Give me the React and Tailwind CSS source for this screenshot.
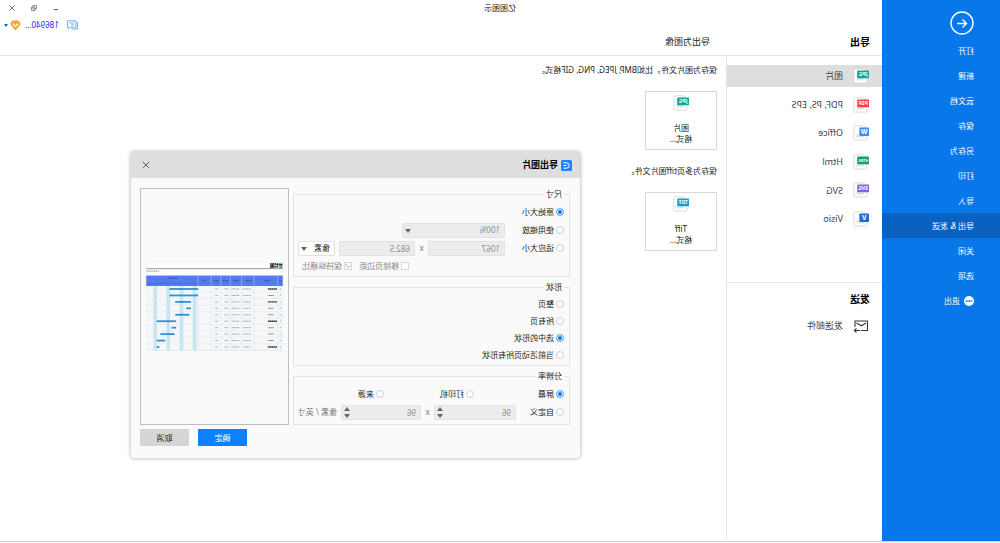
const navItems = ["打开", "新建", "云文档", "保存", "另存为", "打印", "导入", "导出 & 发送", "关闭", "选项"];

const formats = [
  { label: "图片", tag: "JPG", color: "#12a594" },
  { label: "PDF, PS, EPS", tag: "PDF", color: "#fb3c4a" },
  { label: "Office", tag: "W", color: "#3a8ff5", square: true },
  { label: "Html", tag: "HTML", color: "#12a06a" },
  { label: "SVG", tag: "SVG", color: "#8561e8" },
  { label: "Visio", tag: "V", color: "#2567cf", square: true },
];

function FileIcon({ tag, color, square }) {
  const size = square ? 7 : tag === "HTML" ? 3.6 : tag === "TIFF" ? 4.6 : 5.2;
  return (
    <svg viewBox="0 0 16 16" className="size-4 shrink-0" aria-hidden="true">
      <path d="M5 .9h9a1.1 1.1 0 0 1 1.1 1.1v12a1.1 1.1 0 0 1-1.1 1.1H3.2A1.1 1.1 0 0 1 2.1 14V3.8z" fill="#fff" stroke="#d2d2d2" strokeWidth=".8" />
      <path d="M5 9h7.5v3.5H5z" fill="#e4e4e4" />
      <rect x="0" y="2.4" width={square ? 9.6 : 11.8} height={square ? 8.6 : 7.8} rx=".8" fill={color} />
      <text x={square ? 4.8 : 5.9} y={square ? 9.1 : tag.length > 3 ? 7.8 : 8.2} fontSize={size} fontWeight="700" textAnchor="middle" fill="#fff">{tag}</text>
    </svg>
  );
}

function Radio({ name, label, checked, className = "" }) {
  return (
    <label className={`flex shrink-0 items-center gap-0.5 whitespace-nowrap ${className}`}>
      <input
        type="radio"
        name={name}
        defaultChecked={checked}
        className="size-2 shrink-0 appearance-none rounded-full border border-[#cfcfcf] bg-white checked:border-[#6fb0f7] checked:bg-[#0877f0] checked:shadow-[inset_0_0_0_1px_#fff]"
      />
      {label}
    </label>
  );
}

function Check({ label, checked }) {
  return (
    <label className="flex items-center gap-0.5 whitespace-nowrap text-[#8a8a8a]">
      <span className="relative flex">
        <input type="checkbox" disabled defaultChecked={checked} className="peer size-2 appearance-none border border-[#d9d9d9] bg-white" />
        <svg viewBox="0 0 8 8" className="absolute inset-0 hidden size-2 peer-checked:block" aria-hidden="true">
          <path d="M1.6 3.8l1.8 2L6.6 2" fill="none" stroke="#999" strokeWidth=".8" />
        </svg>
      </span>
      {label}
    </label>
  );
}

function Picker({ label, value, disabled, className }) {
  return (
    <span className={`relative flex shrink-0 ${className}`}>
      <select
        aria-label={label}
        disabled={disabled}
        className="h-[15px] w-full appearance-none rounded-[1px] border border-[#e2e2e2] bg-white px-1 text-[#222] opacity-100 disabled:bg-[#ececec] disabled:text-[#909090]"
      >
        <option>{value}</option>
      </select>
      <svg viewBox="0 0 6 4" className="pointer-events-none absolute top-[6px] right-[3px] h-1 w-1.5" aria-hidden="true">
        <path d="M0 0h6L3 4z" fill="#666" />
      </svg>
    </span>
  );
}

function Field({ label, value, spinner, className }) {
  return (
    <span className={`relative flex shrink-0 ${className}`}>
      <input
        aria-label={label}
        disabled
        defaultValue={value}
        className="h-[15px] w-full min-w-0 rounded-[1px] border border-[#e2e2e2] bg-[#ececec] px-1 text-[#909090]"
      />
      {spinner && (
        <svg viewBox="0 0 6 11" className="absolute top-0.5 right-[3px] h-[11px] w-1.5" aria-hidden="true">
          <path d="M0 4h6L3 0zM0 7h6l-3 4z" fill="#666" />
        </svg>
      )}
    </span>
  );
}

function Times() {
  return <span className="w-[13px] shrink-0 text-center text-[#777]">x</span>;
}

function Group({ title, className, children }) {
  return (
    <fieldset className={`min-w-0 border border-[#e4e4e4] px-[5px] ${className}`}>
      <legend className="px-0.5 leading-[12px]">{title}</legend>
      {children}
    </fieldset>
  );
}

const bars = [
  [84.3, 28.4], [84.3, 28.4], [91.3, 15.7], [91.3, 4.7], [93, 14],
  [106, 19.3], [106, 4.7], [107.7, 14], [117, 8.3], [122.7, 2.6],
];
const strips = [86, 99, 112, 125];
const columns = [5.3, 28.7, 41, 52.3, 61.7, 71.3, 84.3];
const cells = [[2, 1.4], [32, 8], [43.5, 7.5], [54.5, 4], [64.5, 3.2]];
const heads = [[1.8, 2], [13, 6], [31.5, 6], [43.5, 6], [54, 6], [64, 5], [76, 4], [105, 9]];

function GanttPreview() {
  return (
    <svg viewBox="0 0 136 88" className="w-full" role="img" aria-label="预览">
      <rect width="136" height="88" fill="#fff" />
      <text x="0" y="5.4" fontSize="4.4" fontWeight="900" fill="#222">甘特图</text>
      <path d="M0 6.6h136" stroke="#8f909c" strokeWidth=".9" />
      <path d="M123 9h13" stroke="#777" strokeWidth=".8" strokeDasharray="1.6 .5" />
      <rect y="13.4" width="136" height="10.6" fill="#557af2" />
      {heads.map(([x, w]) => (
        <path key={x} d={`M${x} ${x > 100 ? 16 : 18.6}h${w}`} stroke="#2f4796" strokeWidth=".9" strokeDasharray="1.2 .3" />
      ))}
      <path d="M85 21.2h50" stroke="#3d5bc0" strokeWidth=".9" strokeDasharray=".9 .9" />
      <rect y="24" width="136" height="64" fill="#f5f7f8" />
      {strips.map((x) => (
        <rect key={x} x={x} y="24" width="3.6" height="64" fill="#c5e6f1" />
      ))}
      {columns.map((x) => (
        <path key={x} d={`M${x} 13.4v74.6`} stroke="#cfe0ee" strokeWidth=".4" />
      ))}
      {bars.map(([x, w], i) => {
        const y = 26.8 + i * 6.4;
        const summary = [0, 2, 5, 9].includes(i);
        return (
          <g key={i}>
            <path d={`M0 ${y + 3.2}h136`} stroke="#dfe6ec" strokeWidth=".5" />
            <rect x={x} y={y - 0.9} width={w} height="1.8" fill="#2f8fd8" />
            <path d={`M${summary ? 6 : 9} ${y}h${summary ? 9 : 6}`} stroke={summary ? "#333" : "#888"} strokeWidth={summary ? 1.3 : 1} strokeDasharray="1.6 .3" />
            {cells.map(([cx, cw]) => (
              <path key={cx} d={`M${cx} ${y}h${cw}`} stroke="#999" strokeWidth=".9" strokeDasharray="1 .3" />
            ))}
          </g>
        );
      })}
      <path d="M.2 .2h135.6v87.6H.2z" fill="none" stroke="#e4e6ea" strokeWidth=".4" />
    </svg>
  );
}

function ExportCard({ tag, color, title }) {
  return (
    <button className="mt-[15px] flex h-[59px] w-[72px] flex-col items-center border border-[#d8d8d8] bg-white pt-[3px] leading-[11px]">
      <FileIcon tag={tag} color={color} />
      <span className="mt-[11px]">{title}</span>
      <span>格式...</span>
    </button>
  );
}

function Sidebar() {
  return (
    <nav className="w-[118px] shrink-0 bg-[#0877ea] text-white">
      <button aria-label="返回" className="mt-[11px] mb-[3px] ml-[26px] block size-6">
        <svg viewBox="0 0 24 24" fill="none" stroke="#fff" strokeWidth="1.4" aria-hidden="true">
          <circle cx="12" cy="12" r="11" />
          <path d="M17 12.5H7.5M11.5 8.5l-4 4 4 4" />
        </svg>
      </button>
      {navItems.map((item) => (
        <a
          key={item}
          href="#"
          aria-current={item === "导出 & 发送" ? "page" : undefined}
          className="flex h-[25px] items-center pl-[26px] aria-[current=page]:bg-[#0962c2]"
        >
          {item}
        </a>
      ))}
      <a href="#" className="flex h-[25px] items-center gap-1 pl-[26px]">
        <svg viewBox="0 0 10 10" className="size-2.5" aria-hidden="true">
          <circle cx="5" cy="5" r="5" fill="#fff" />
          <path d="M1.5 5h7" stroke="#0877ea" strokeWidth="1.2" />
        </svg>
        退出
      </a>
    </nav>
  );
}

function Header() {
  return (
    <header className="flex h-14 flex-col border-b border-[#e6e6e6]">
      <div className="-ml-[118px] grid h-4 grid-cols-[1fr_auto_1fr] items-center">
        <h1 className="col-start-2">亿图图示</h1>
        <div className="flex justify-end gap-4 pr-[9px] text-[#666]">
          <button aria-label="最小化">
            <svg viewBox="0 0 6 6" className="size-1.5"><path d="M1 4.5h4.5" stroke="currentColor" /></svg>
          </button>
          <button aria-label="还原">
            <svg viewBox="0 0 6 6" className="size-1.5" fill="none" stroke="currentColor" strokeWidth=".7">
              <path d="M.5 .5h3.5v3.5H.5zM2 2h3.5v3.5H2z" />
            </svg>
          </button>
          <button aria-label="关闭窗口">
            <svg viewBox="0 0 6 6" className="size-1.5"><path d="M.5 .5l5 5M5.5 .5l-5 5" stroke="currentColor" strokeWidth=".9" /></svg>
          </button>
        </div>
      </div>
      <div className="flex h-[18px] items-center justify-end pr-1">
        <button aria-label="消息" className="mr-2">
          <svg viewBox="0 0 11 10" className="h-2.5 w-[11px]" fill="none" stroke="#4a9fec" strokeWidth=".8">
            <path d="M.6 1.8v5.8M2 .8h8.4v6.4H9.8v1.600L8 7.2H2zM3.8 2.9h4.8M3.8 4.9h3.2M.6 7.6V9h6" />
          </svg>
        </button>
        <button className="flex items-center text-[#2a1cff]">
          186940...
          <svg viewBox="0 0 11 11" className="ml-1 size-[11px]" aria-hidden="true">
            <path d="M2.6 .6h5.8L10.8 4 5.5 10.6.2 4z" fill="#f5a32c" />
            <path d="M3 3.5l2.5 3 2.5-3" fill="none" stroke="#fff" strokeWidth="1.3" />
          </svg>
          <svg viewBox="0 0 4 3" className="ml-0.5 h-[3px] w-1" aria-hidden="true"><path d="M0 0h4L2 3z" fill="#1d62b5" /></svg>
        </button>
      </div>
      <div className="flex h-4 items-center">
        <h2 className="w-[160px] pl-3 text-[10px] font-bold text-black">导出</h2>
        <h2 className="pl-3 text-[9px]">导出为图像</h2>
      </div>
    </header>
  );
}

function FormatColumn() {
  return (
    <aside className="w-[156px] shrink-0 border-r border-[#e6e6e6] pt-[9px] text-[9px] text-[#444]">
      <div className="flex h-[165px] flex-col justify-between">
        {formats.map((f, i) => (
          <button key={f.tag} aria-pressed={i === 0} className="flex h-[22px] items-center gap-2.5 pl-[13px] aria-pressed:bg-[#dedede]">
            <FileIcon {...f} />
            {f.label}
          </button>
        ))}
      </div>
      <section className="mt-[52px] border-t border-[#e6e6e6] pt-2.5">
        <h2 className="pl-3 text-[10px] leading-[12px] font-bold text-black">发送</h2>
        <button className="mt-2.5 flex h-[22px] items-center gap-2.5 pl-[13px]">
          <svg viewBox="0 0 16 16" className="size-4" fill="none" stroke="#333" strokeWidth="1.1" aria-hidden="true">
            <path d="M8 12.5H1.5v-9.500h12.500v6M3 5l4.700 2.800L12.500 5M9 12.500h5.500M12.500 10.300l2.200 2.200-2.200 2.200" />
          </svg>
          发送邮件
        </button>
      </section>
    </aside>
  );
}

function ExportDialog() {
  return (
    <div
      role="dialog"
      aria-label="导出图片"
      className="absolute top-[152px] left-[42%] w-[449px] overflow-hidden rounded-[3px] bg-[#fafafa] shadow-[0_0_4px_rgba(0,0,0,0.35)]"
    >
      <div className="flex h-[26px] items-center bg-[#dedede] pr-[11px] pl-2">
        <svg viewBox="0 0 11 11" className="mr-[3px] size-[11px]" aria-hidden="true">
          <rect width="11" height="11" rx="1.5" fill="#1a86fa" />
          <path d="M8.5 2.8h-3a2.7 2.7 0 0 0 0 5.4h3M5.5 5.5h3" fill="none" stroke="#fff" strokeWidth="1" />
        </svg>
        <h2 className="text-[9px] font-bold text-black">导出图片</h2>
        <button aria-label="关闭" className="ml-auto">
          <svg viewBox="0 0 8 8" className="size-2"><path d="M.8 .8l6.4 6.4M7.2 .8L.8 7.2" stroke="#555" strokeWidth=".9" /></svg>
        </button>
      </div>
      <div className="flex gap-1 pt-2.5 pr-[9px] pl-2.5">
        <div className="flex w-[277px] flex-col gap-1">
          <Group title="尺寸" className="pt-[3px] pb-px">
            <div className="flex h-[18px] items-center"><Radio name="size" label="原始大小" checked /></div>
            <div className="flex h-[18px] items-center">
              <Radio name="size" label="使用缩放" className="w-[59px]" />
              <Picker label="缩放比例" value="100%" disabled className="w-[103px]" />
            </div>
            <div className="flex h-[18px] items-center">
              <Radio name="size" label="适应大小" className="w-[59px]" />
              <Field label="宽度" value="1067" className="w-[77px]" />
              <Times />
              <Field label="高度" value="682.5" className="w-[76px]" />
              <Picker label="单位" value="像素" className="ml-1 w-[37px]" />
            </div>
            <div className="flex h-[18px] items-center gap-[7px] pl-[155px]">
              <Check label="移除页边距" />
              <Check label="保持纵横比" checked />
            </div>
          </Group>
          <Group title="形状" className="pt-0.5 pb-0.5">
            <div className="flex h-[17px] items-center"><Radio name="shape" label="整页" /></div>
            <div className="flex h-[17px] items-center"><Radio name="shape" label="所有页" /></div>
            <div className="flex h-[17px] items-center"><Radio name="shape" label="选中的形状" checked /></div>
            <div className="flex h-[17px] items-center"><Radio name="shape" label="当前活动页所有形状" /></div>
          </Group>
          <Group title="分辨率" className="pt-[3px] pb-[3px]">
            <div className="flex h-[18px] items-center">
              <Radio name="dpi" label="屏幕" checked className="w-[90px]" />
              <Radio name="dpi" label="打印机" className="w-[90px]" />
              <Radio name="dpi" label="来源" />
            </div>
            <div className="flex h-[18px] items-center">
              <Radio name="dpi" label="自定义" className="w-12" />
              <Field label="水平分辨率" value="96" spinner className="w-[82px]" />
              <Times />
              <Field label="垂直分辨率" value="96" spinner className="w-[80px]" />
              <span className="ml-1 whitespace-nowrap text-[#777]">像素 / 英寸</span>
            </div>
          </Group>
        </div>
        <div className="flex min-w-0 flex-1 items-center border border-[#b9bfbf] px-[5px]">
          <GanttPreview />
        </div>
      </div>
      <div className="flex justify-end gap-[9px] pt-1 pr-[9px] pb-3">
        <button className="h-[17px] w-[49px] rounded-[1px] bg-[#0c80ff] text-white">确定</button>
        <button className="h-[17px] w-[49px] rounded-[1px] bg-[#d5d5d8]">取消</button>
      </div>
    </div>
  );
}

export default function App() {
  return (
    <div className="relative flex min-h-[calc(100vh-1px)] -scale-x-100 border-b border-[#cfcfcf] bg-white font-['Noto_Sans','Noto_Sans_CJK_SC',sans-serif] text-[8px] text-[#222]" lang="zh-CN">
      <Sidebar />
      <div className="flex min-w-0 flex-1 flex-col">
        <Header />
        <div className="flex flex-1">
          <FormatColumn />
          <main className="flex-1 pt-2 pl-[9px]">
            <p className="leading-[12px]">保存为图片文件，比如BMP, JPEG, PNG, GIF格式。</p>
            <ExportCard tag="JPG" color="#12a594" title="图片" />
            <p className="mt-[15px] leading-[12px]">保存为多页tiff图片文件。</p>
            <ExportCard tag="TIFF" color="#1d9ad6" title="Tiff" />
          </main>
        </div>
      </div>
      <ExportDialog />
    </div>
  );
}
